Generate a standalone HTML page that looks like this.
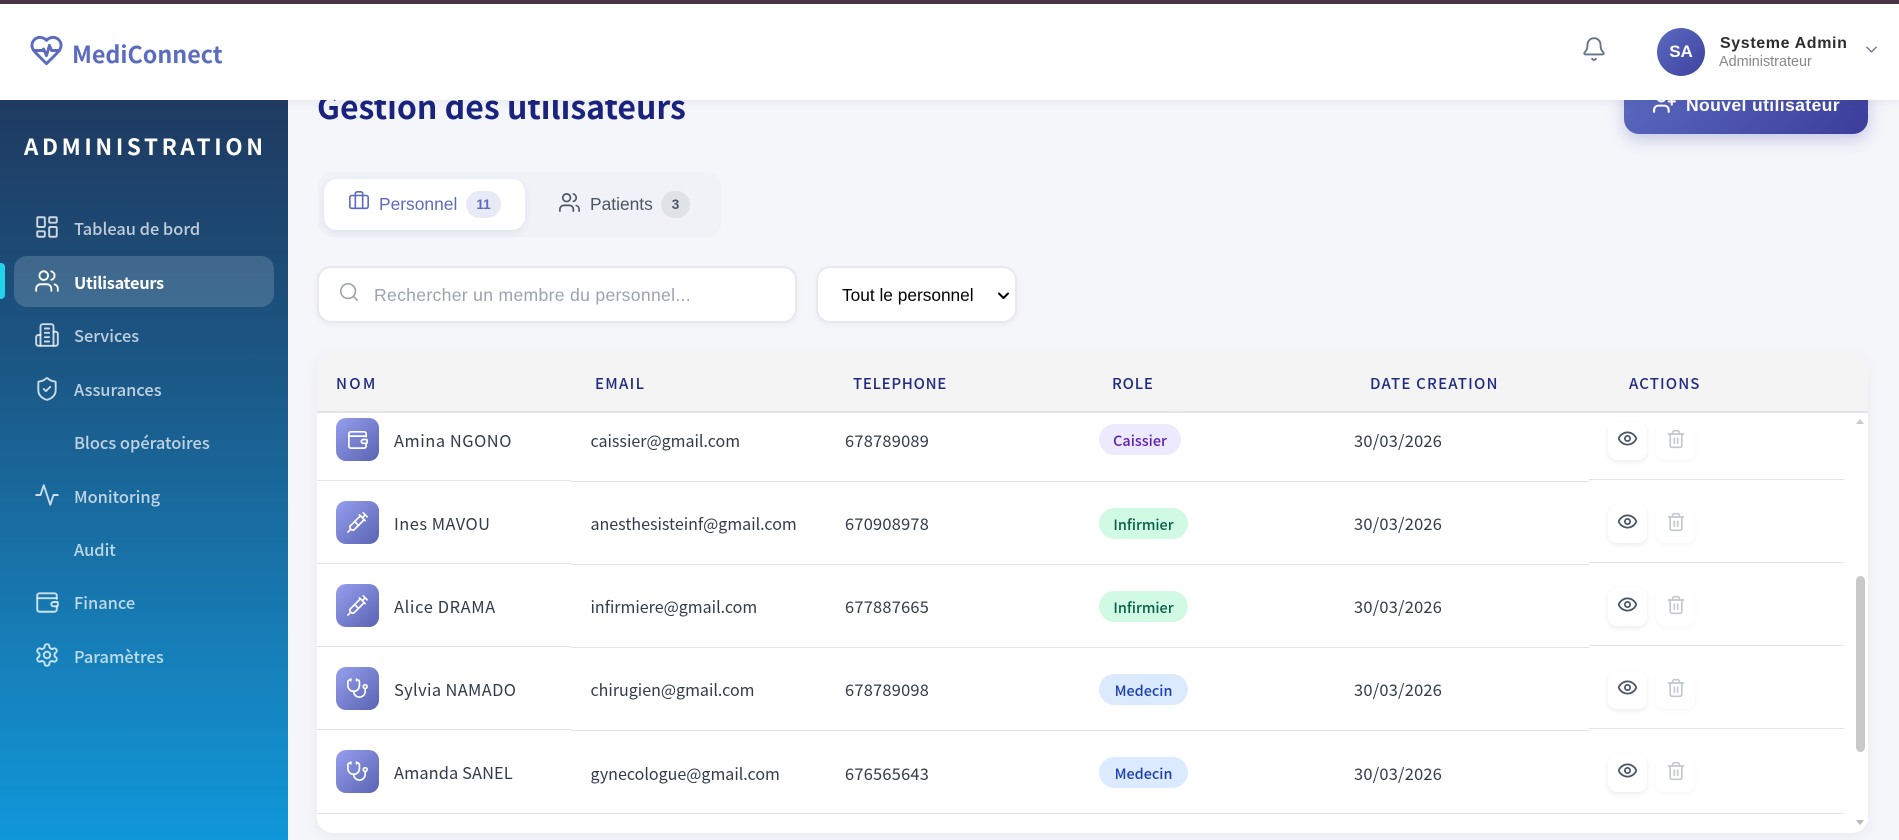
<!DOCTYPE html>
<html lang="fr"><head><meta charset="utf-8"><title>MediConnect</title>
<style>
*{box-sizing:border-box}
html,body{margin:0;padding:0}
body{width:1899px;height:840px;position:relative;overflow:hidden;background:#f5f6fa;font-family:"Liberation Sans",sans-serif}
.a{position:absolute;white-space:nowrap}
.s{font-family:"Noto Sans CJK SC","Liberation Sans",sans-serif}
.i{position:absolute;fill:none;stroke:currentColor;stroke-width:2;stroke-linecap:round;stroke-linejoin:round}
#side{left:0;top:100px;width:288px;height:740px;background:linear-gradient(180deg,#1f3a60 0%,#1b5684 35%,#1682bd 78%,#0f97d9 100%)}
.nav{left:74px;font-size:16.4px;line-height:24px;font-weight:500;color:rgba(255,255,255,.72)}
.ni{color:rgba(255,255,255,.78);stroke-width:1.75}
.cell{font-size:16.4px;line-height:22px;color:#333a4b}
.em{font-size:16.05px;left:590.500px}
.nm{left:394px}
.nb{left:845px;letter-spacing:.25px}
.dt{left:1354px;letter-spacing:.25px}
.th{top:373px;font-size:15px;line-height:22px;font-weight:500;letter-spacing:1.1px;color:#1f2a80}
.ln{height:1.3px;background:#e2e3e6}
.av{left:336px;width:43px;height:43px;border-radius:10px;background:linear-gradient(135deg,#969fef,#5a63b1);color:#fff}
.bd{left:1099px;height:31px;line-height:33px;border-radius:16px;text-align:center;font-size:14.4px;font-weight:500}
.b1{width:82px;background:#ede9fe;color:#5b21b6}
.b2{width:89px;background:#d1fae5;color:#065f46}
.b3{width:89px;background:#dbeafe;color:#1e40af}
.btn{width:39px;height:38px;border-radius:9px;background:#fff;box-shadow:0 2px 5px rgba(30,40,80,.09)}
.btn.d{box-shadow:0 2px 5px rgba(30,40,80,.035)}
</style></head><body>
<svg width="0" height="0" style="position:absolute"><defs>
<symbol id="users" viewBox="0 0 24 24"><path d="M16 21v-2a4 4 0 0 0-4-4H6a4 4 0 0 0-4 4v2"/><circle cx="9" cy="7" r="4"/><path d="M22 21v-2a4 4 0 0 0-3-3.87"/><path d="M16 3.13a4 4 0 0 1 0 7.75"/></symbol>
<symbol id="wallet" viewBox="0 0 24 24"><path d="M21 9V6a2 2 0 0 0-2-2H5a2 2 0 0 0-2 2v13a2 2 0 0 0 2 2h14a2 2 0 0 0 2-2v-3"/><path d="M3 8.500h18"/><path d="M21 12h-3a2 2 0 0 0 0 4h3a1 1 0 0 0 1-1v-2a1 1 0 0 0-1-1z"/></symbol>
<symbol id="syr" viewBox="0 0 24 24"><path d="m18 2 4 4"/><path d="m17 7 3-3"/><path d="M19 9 8.700 19.300c-1 1-2.500 1-3.400 0l-.6-.6c-1-1-1-2.500 0-3.400L15 5"/><path d="m9 11 4 4"/><path d="m5 19-3 3"/><path d="m14 4 6 6"/></symbol>
<symbol id="ste" viewBox="0 0 24 24"><path d="M11 2v2"/><path d="M5 2v2"/><path d="M5 3H4a2 2 0 0 0-2 2v4a6 6 0 0 0 12 0V5a2 2 0 0 0-2-2h-1"/><path d="M8 15a6 6 0 0 0 12 0v-3"/><circle cx="20" cy="10" r="2"/></symbol>
<symbol id="eye" viewBox="0 0 24 24"><path d="M2.062 12.348a1 1 0 0 1 0-.696 10.750 10.750 0 0 1 19.876 0 1 1 0 0 1 0 .696 10.750 10.750 0 0 1-19.876 0"/><circle cx="12" cy="12" r="3"/></symbol>
<symbol id="tr" viewBox="0 0 24 24"><path d="M3 6h18"/><path d="M19 6v14c0 1-1 2-2 2H7c-1 0-2-1-2-2V6"/><path d="M8 6V4c0-1 1-2 2-2h4c1 0 2 1 2 2v2"/><path d="M10 11v6"/><path d="M14 11v6"/></symbol>
</defs></svg>

<!-- main content -->
<div class="a s" style="left:317px;top:82px;font-size:32px;line-height:48px;font-weight:700;color:#1a237e">Gestion des utilisateurs</div>
<div class="a" style="left:1624px;top:80px;width:244px;height:54px;border-radius:15px;background:linear-gradient(135deg,#5c6bc0,#3b3d9b);box-shadow:0 6px 16px rgba(60,70,170,.25)"></div>
<svg class="i" style="left:1652px;top:90px;color:#fff" width="25" height="25" viewBox="0 0 24 24"><path d="M16 21v-2a4 4 0 0 0-4-4H6a4 4 0 0 0-4 4v2"/><circle cx="9" cy="7" r="4"/><path d="M19 8v6"/><path d="M22 11h-6"/></svg>
<div class="a" style="left:1686px;top:94px;font-size:17.6px;line-height:22px;font-weight:700;letter-spacing:.35px;color:#fff">Nouvel utilisateur</div>

<!-- tabs -->
<div class="a" style="left:318px;top:172px;width:403px;height:65px;border-radius:14px;background:#f0f2f8"></div>
<div class="a" style="left:324px;top:179px;width:201px;height:51px;border-radius:13px;background:#fff;box-shadow:0 3px 8px rgba(40,50,90,.08)"></div>
<svg class="i" style="left:348px;top:190px;color:#5c6bc0;stroke-width:1.75" width="22" height="22" viewBox="0 0 24 24"><path d="M16 20V4a2 2 0 0 0-2-2h-4a2 2 0 0 0-2 2v16"/><rect x="2" y="6" width="20" height="14" rx="2"/></svg>
<div class="a" style="left:379px;top:193px;font-size:17.4px;line-height:22px;color:#5c6bc0">Personnel</div>
<div class="a" style="left:466px;top:191px;width:35px;height:27px;line-height:27px;border-radius:14px;background:#e8eaf6;color:#5c6bc0;text-align:center;font-size:13.6px;font-weight:700">11</div>
<svg class="i" style="left:558px;top:191px;color:#4b5563;stroke-width:1.75" width="23" height="23" viewBox="0 0 24 24"><use href="#users"/></svg>
<div class="a" style="left:590px;top:193px;font-size:17.4px;line-height:22px;color:#4b5563">Patients</div>
<div class="a" style="left:661px;top:191px;width:29px;height:27px;line-height:27px;border-radius:14px;background:#dfe2e6;color:#4b5563;text-align:center;font-size:13.6px;font-weight:700">3</div>

<!-- search + filter -->
<div class="a" style="left:317px;top:266px;width:480px;height:57px;border-radius:14px;background:#fff;border:2px solid #e8e9ee;box-shadow:0 2px 6px rgba(40,50,90,.05)"></div>
<svg class="i" style="left:338px;top:281px;color:#9ca3af;stroke-width:1.75" width="22" height="22" viewBox="0 0 24 24"><circle cx="11" cy="11" r="8"/><path d="m21 21-4.300-4.300"/></svg>
<div class="a" style="left:374px;top:284px;font-size:17.6px;line-height:22px;letter-spacing:.3px;color:#9ca3af">Rechercher un membre du personnel...</div>
<select class="a" style="left:816px;top:266px;width:201px;height:57px;border-radius:14px;background:#fff;border:2px solid #e8e9ee;box-shadow:0 2px 6px rgba(40,50,90,.05);font:17.3px 'Liberation Sans',sans-serif;color:#000;padding:0 0 0 24px;-webkit-appearance:none;appearance:none"><option>Tout le personnel</option></select>
<svg class="i" style="left:997px;top:289px;color:#000;stroke-width:2" width="13" height="13" viewBox="0 0 13 13"><path d="M2 4.500l4.500 4.500 4.500-4.500"/></svg>

<!-- table -->
<div class="a" style="left:317px;top:352px;width:1551px;height:481px;border-radius:16px;background:#fff;box-shadow:0 4px 14px rgba(40,50,90,.06);overflow:hidden">
<div class="a" style="left:0;top:0;width:1551px;height:61px;background:#f4f4f5;border-bottom:2px solid #e3e4e7"></div>
<div class="a" style="left:1539px;top:61px;width:12px;height:420px;background:#fff"></div>
<div class="a" style="left:1539px;top:224px;width:9px;height:176px;border-radius:5px;background:#c9c9c9"></div>
<div class="a" style="left:1539px;top:67px;width:0;height:0;border-left:4.500px solid transparent;border-right:4.500px solid transparent;border-bottom:5px solid #c9c9c9"></div>
<div class="a" style="left:1539px;top:468px;width:0;height:0;border-left:4.500px solid transparent;border-right:4.500px solid transparent;border-top:5px solid #b8b8b8"></div>
</div>
<div class="a s th" style="left:336px;letter-spacing:2.3px">NOM</div>
<div class="a s th" style="left:595px;letter-spacing:1.3px">EMAIL</div>
<div class="a s th" style="left:853px;letter-spacing:.7px">TELEPHONE</div>
<div class="a s th" style="left:1112px;letter-spacing:.8px">ROLE</div>
<div class="a s th" style="left:1370px;letter-spacing:1.2px">DATE CREATION</div>
<div class="a s th" style="left:1629px">ACTIONS</div>

<!-- row 1 -->
<div class="a av" style="top:418px"><svg class="i" style="left:10px;top:10px;stroke-width:1.75" width="23" height="23"><use href="#wallet"/></svg></div>
<div class="a s cell nm" style="top:429px;letter-spacing:.55px">Amina NGONO</div>
<div class="a s cell em" style="top:429px">caissier@gmail.com</div>
<div class="a s cell nb" style="top:429px">678789089</div>
<div class="a s bd b1" style="top:424px">Caissier</div>
<div class="a s cell dt" style="top:429px">30/03/2026</div>
<div class="a btn" style="left:1608px;top:422px"></div>
<div class="a btn d" style="left:1656px;top:422px"></div>
<svg class="i" style="left:1617px;top:428px;color:#4a5568" width="21" height="21"><use href="#eye"/></svg>
<svg class="i" style="left:1666px;top:429px;color:#c3c8d0" width="20" height="20"><use href="#tr"/></svg>
<div class="a ln" style="left:317px;top:480px;width:254px"></div><div class="a ln" style="left:571px;top:481px;width:1018px"></div><div class="a ln" style="left:1589px;top:479px;width:255px"></div>

<!-- row 2 -->
<div class="a av" style="top:501px"><svg class="i" style="left:10px;top:10px;stroke-width:1.75" width="23" height="23"><use href="#syr"/></svg></div>
<div class="a s cell nm" style="top:512px;letter-spacing:.5px">Ines MAVOU</div>
<div class="a s cell em" style="top:512px">anesthesisteinf@gmail.com</div>
<div class="a s cell nb" style="top:512px">670908978</div>
<div class="a s bd b2" style="top:508px">Infirmier</div>
<div class="a s cell dt" style="top:512px">30/03/2026</div>
<div class="a btn" style="left:1608px;top:505px"></div>
<div class="a btn d" style="left:1656px;top:505px"></div>
<svg class="i" style="left:1617px;top:511px;color:#4a5568" width="21" height="21"><use href="#eye"/></svg>
<svg class="i" style="left:1666px;top:512px;color:#c3c8d0" width="20" height="20"><use href="#tr"/></svg>
<div class="a ln" style="left:317px;top:563px;width:254px"></div><div class="a ln" style="left:571px;top:564px;width:1018px"></div><div class="a ln" style="left:1589px;top:562px;width:255px"></div>

<!-- row 3 -->
<div class="a av" style="top:584px"><svg class="i" style="left:10px;top:10px;stroke-width:1.75" width="23" height="23"><use href="#syr"/></svg></div>
<div class="a s cell nm" style="top:595px;letter-spacing:.65px">Alice DRAMA</div>
<div class="a s cell em" style="top:595px">infirmiere@gmail.com</div>
<div class="a s cell nb" style="top:595px">677887665</div>
<div class="a s bd b2" style="top:591px">Infirmier</div>
<div class="a s cell dt" style="top:595px">30/03/2026</div>
<div class="a btn" style="left:1608px;top:588px"></div>
<div class="a btn d" style="left:1656px;top:588px"></div>
<svg class="i" style="left:1617px;top:594px;color:#4a5568" width="21" height="21"><use href="#eye"/></svg>
<svg class="i" style="left:1666px;top:595px;color:#c3c8d0" width="20" height="20"><use href="#tr"/></svg>
<div class="a ln" style="left:317px;top:646px;width:254px"></div><div class="a ln" style="left:571px;top:647px;width:1018px"></div><div class="a ln" style="left:1589px;top:645px;width:255px"></div>

<!-- row 4 -->
<div class="a av" style="top:667px"><svg class="i" style="left:10px;top:10px;stroke-width:1.75" width="23" height="23"><use href="#ste"/></svg></div>
<div class="a s cell nm" style="top:678px;letter-spacing:.37px">Sylvia NAMADO</div>
<div class="a s cell em" style="top:678px">chirugien@gmail.com</div>
<div class="a s cell nb" style="top:678px">678789098</div>
<div class="a s bd b3" style="top:674px">Medecin</div>
<div class="a s cell dt" style="top:678px">30/03/2026</div>
<div class="a btn" style="left:1608px;top:671px"></div>
<div class="a btn d" style="left:1656px;top:671px"></div>
<svg class="i" style="left:1617px;top:677px;color:#4a5568" width="21" height="21"><use href="#eye"/></svg>
<svg class="i" style="left:1666px;top:678px;color:#c3c8d0" width="20" height="20"><use href="#tr"/></svg>
<div class="a ln" style="left:317px;top:729px;width:254px"></div><div class="a ln" style="left:571px;top:730px;width:1018px"></div><div class="a ln" style="left:1589px;top:728px;width:255px"></div>

<!-- row 5 -->
<div class="a av" style="top:750px"><svg class="i" style="left:10px;top:10px;stroke-width:1.75" width="23" height="23"><use href="#ste"/></svg></div>
<div class="a s cell nm" style="top:761px;letter-spacing:.1px">Amanda SANEL</div>
<div class="a s cell em" style="top:762px">gynecologue@gmail.com</div>
<div class="a s cell nb" style="top:762px">676565643</div>
<div class="a s bd b3" style="top:757px">Medecin</div>
<div class="a s cell dt" style="top:762px">30/03/2026</div>
<div class="a btn" style="left:1608px;top:754px"></div>
<div class="a btn d" style="left:1656px;top:754px"></div>
<svg class="i" style="left:1617px;top:760px;color:#4a5568" width="21" height="21"><use href="#eye"/></svg>
<svg class="i" style="left:1666px;top:761px;color:#c3c8d0" width="20" height="20"><use href="#tr"/></svg>
<div class="a ln" style="left:317px;top:813px;width:1527px"></div>

<!-- sidebar -->
<div class="a" id="side"></div>
<div class="a s" style="left:24px;top:130px;font-size:22.4px;line-height:32px;font-weight:700;letter-spacing:3.65px;color:#fff">ADMINISTRATION</div>
<svg class="i ni" style="left:34px;top:214px" width="26" height="26" viewBox="0 0 24 24"><rect x="3" y="3" width="7" height="9" rx="1"/><rect x="14" y="3" width="7" height="5" rx="1"/><rect x="14" y="12" width="7" height="9" rx="1"/><rect x="3" y="16" width="7" height="5" rx="1"/></svg>
<div class="a s nav" style="top:216px">Tableau de bord</div>
<div class="a" style="left:14px;top:256px;width:260px;height:51px;border-radius:13px;background:rgba(255,255,255,.16)"></div>
<div class="a" style="left:0;top:263px;width:5px;height:36px;border-radius:0 4px 4px 0;background:#22d3ee"></div>
<svg class="i ni" style="left:34px;top:268px;color:#fff" width="26" height="26"><use href="#users"/></svg>
<div class="a s nav" style="top:270px;color:#fff;font-weight:700;letter-spacing:-.3px">Utilisateurs</div>
<svg class="i ni" style="left:34px;top:322px" width="26" height="26" viewBox="0 0 24 24"><path d="M6 22V4a2 2 0 0 1 2-2h8a2 2 0 0 1 2 2v18Z"/><path d="M6 12H4a2 2 0 0 0-2 2v6a2 2 0 0 0 2 2h2"/><path d="M18 9h2a2 2 0 0 1 2 2v9a2 2 0 0 1-2 2h-2"/><path d="M10 6h4"/><path d="M10 10h4"/><path d="M10 14h4"/><path d="M10 18h4"/></svg>
<div class="a s nav" style="top:323px">Services</div>
<svg class="i ni" style="left:34px;top:376px" width="26" height="26" viewBox="0 0 24 24"><path d="M20 13c0 5-3.500 7.500-7.660 8.950a1 1 0 0 1-.67-.01C7.500 20.500 4 18 4 13V6a1 1 0 0 1 1-1c2 0 4.500-1.200 6.240-2.720a1.170 1.170 0 0 1 1.520 0C14.510 3.810 17 5 19 5a1 1 0 0 1 1 1z"/><path d="m9 12 2 2 4-4"/></svg>
<div class="a s nav" style="top:377px">Assurances</div>
<div class="a s nav" style="top:430px">Blocs opératoires</div>
<svg class="i ni" style="left:34px;top:482px" width="26" height="26" viewBox="0 0 24 24"><path d="M22 12h-4l-3 9L9 3l-3 9H2"/></svg>
<div class="a s nav" style="top:484px">Monitoring</div>
<div class="a s nav" style="top:537px">Audit</div>
<svg class="i ni" style="left:34px;top:589px" width="26" height="26"><use href="#wallet"/></svg>
<div class="a s nav" style="top:590px">Finance</div>
<svg class="i ni" style="left:34px;top:642px" width="26" height="26" viewBox="0 0 24 24"><path d="M12.220 2h-.44a2 2 0 0 0-2 2v.18a2 2 0 0 1-1 1.730l-.43.25a2 2 0 0 1-2 0l-.15-.08a2 2 0 0 0-2.730.73l-.22.38a2 2 0 0 0 .73 2.730l.15.1a2 2 0 0 1 1 1.720v.51a2 2 0 0 1-1 1.740l-.15.09a2 2 0 0 0-.73 2.730l.22.38a2 2 0 0 0 2.730.73l.15-.08a2 2 0 0 1 2 0l.43.25a2 2 0 0 1 1 1.730V20a2 2 0 0 0 2 2h.44a2 2 0 0 0 2-2v-.18a2 2 0 0 1 1-1.730l.43-.25a2 2 0 0 1 2 0l.15.08a2 2 0 0 0 2.730-.73l.22-.39a2 2 0 0 0-.73-2.730l-.15-.08a2 2 0 0 1-1-1.740v-.5a2 2 0 0 1 1-1.740l.15-.09a2 2 0 0 0 .73-2.730l-.22-.38a2 2 0 0 0-2.730-.73l-.15.08a2 2 0 0 1-2 0l-.43-.25a2 2 0 0 1-1-1.730V4a2 2 0 0 0-2-2z"/><circle cx="12" cy="12" r="3"/></svg>
<div class="a s nav" style="top:644px">Paramètres</div>

<!-- header -->
<div class="a" style="left:0;top:0;width:1899px;height:100px;background:#fff;border-top:4px solid #4a3646;box-shadow:0 2px 10px rgba(30,40,80,.07)"></div>
<svg class="i" style="left:29px;top:33px;color:#5c6bc0;stroke-width:2" width="35" height="35" viewBox="0 0 24 24"><path d="M19 14c1.490-1.460 3-3.210 3-5.500A5.500 5.500 0 0 0 16.500 3c-1.760 0-3 .5-4.500 2-1.500-1.500-2.740-2-4.500-2A5.500 5.500 0 0 0 2 8.500c0 2.300 1.500 4.050 3 5.500l7 7Z"/><path d="M3.220 12H9.500l.5-1 2 4.500 2-7 1.500 3.500h5.270"/></svg>
<div class="a s" style="left:72px;top:36px;font-size:23.3px;line-height:34px;font-weight:700;color:#5c6bc0">MediConnect</div>
<svg class="i" style="left:1581px;top:36px;color:#64748b;stroke-width:1.75" width="26" height="26" viewBox="0 0 24 24"><path d="M10.268 21a2 2 0 0 0 3.464 0"/><path d="M3.262 15.326A1 1 0 0 0 4 17h16a1 1 0 0 0 .74-1.673C19.410 13.956 18 12.499 18 8A6 6 0 0 0 6 8c0 4.499-1.411 5.956-2.738 7.326"/></svg>
<div class="a" style="left:1657px;top:28px;width:48px;height:48px;line-height:48px;border-radius:50%;background:linear-gradient(135deg,#5c6bc0,#3d429f);color:#fff;text-align:center;font-size:17px;font-weight:700">SA</div>
<div class="a" style="left:1720px;top:34px;font-size:16px;line-height:20px;font-weight:700;letter-spacing:.62px;color:#2d2d2d">Systeme Admin</div>
<div class="a" style="left:1719px;top:53px;font-size:14.4px;line-height:18px;color:#888">Administrateur</div>
<svg class="i" style="left:1862px;top:40px;color:#64748b;stroke-width:1.6" width="19" height="19" viewBox="0 0 24 24"><path d="m6 9 6 6 6-6"/></svg>
</body></html>
